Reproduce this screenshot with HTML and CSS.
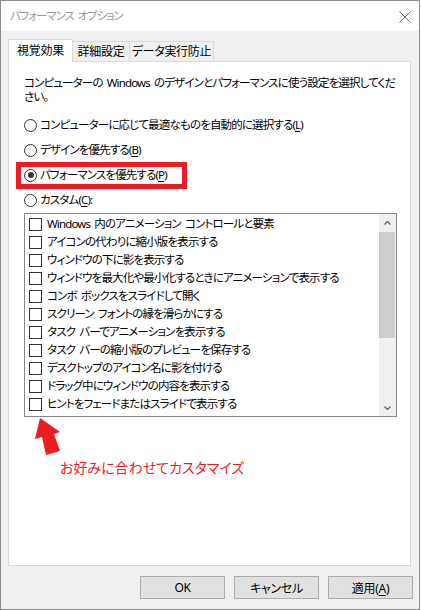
FILE: index.html
```html
<!DOCTYPE html>
<html lang="ja">
<head>
  <meta charset="UTF-8">
  <meta name="viewport" content="width=device-width, initial-scale=1.0">
  <title>パフォーマンス オプション</title>
  <link rel="stylesheet" href="styles.css">
</head>
<body>
  <div class="window">
    <div class="titlebar">
      <span class="title">パフォーマンス オプション</span>
      <svg class="close" width="12" height="12" viewBox="0 0 12 12">
        <path d="M0.5 0.5 L11.5 11.5 M11.5 0.5 L0.5 11.5" stroke="#666" stroke-width="1" fill="none"/>
      </svg>
    </div>

    <div class="dialog">
      <div class="tabs">
        <div class="tab active">視覚効果</div>
        <div class="tab">詳細設定</div>
        <div class="tab">データ実行防止</div>
      </div>

      <div class="panel">
        <p class="desc">コンピューターの Windows のデザインとパフォーマンスに使う設定を選択してください。</p>

        <div class="options">
          <label class="radio"><span class="circle"></span>コンピューターに応じて最適なものを自動的に選択する(<u>L</u>)</label>
          <label class="radio"><span class="circle"></span>デザインを優先する(<u>B</u>)</label>
          <label class="radio checked"><span class="circle"></span>パフォーマンスを優先する(<u>P</u>)<span class="mark"></span></label>
          <label class="radio"><span class="circle"></span>カスタム(<u>C</u>):</label>
        </div>

        <div class="list">
          <ul class="items">
            <li><span class="box"></span>Windows 内のアニメーション コントロールと要素</li>
            <li><span class="box"></span>アイコンの代わりに縮小版を表示する</li>
            <li><span class="box"></span>ウィンドウの下に影を表示する</li>
            <li><span class="box"></span>ウィンドウを最大化や最小化するときにアニメーションで表示する</li>
            <li><span class="box"></span>コンボ ボックスをスライドして開く</li>
            <li><span class="box"></span>スクリーン フォントの縁を滑らかにする</li>
            <li><span class="box"></span>タスク バーでアニメーションを表示する</li>
            <li><span class="box"></span>タスク バーの縮小版のプレビューを保存する</li>
            <li><span class="box"></span>デスクトップのアイコン名に影を付ける</li>
            <li><span class="box"></span>ドラッグ中にウィンドウの内容を表示する</li>
            <li><span class="box"></span>ヒントをフェードまたはスライドで表示する</li>
          </ul>
          <div class="scrollbar">
            <div class="sb-btn">
              <svg width="7" height="4" viewBox="0 0 7 4"><path d="M0.5 3.5 L3.5 0.5 L6.5 3.5" stroke="#606060" stroke-width="1.3" fill="none"/></svg>
            </div>
            <div class="thumb"></div>
            <div class="track"></div>
            <div class="sb-btn">
              <svg width="7" height="4" viewBox="0 0 7 4"><path d="M0.5 0.5 L3.5 3.5 L6.5 0.5" stroke="#606060" stroke-width="1.3" fill="none"/></svg>
            </div>
          </div>
        </div>

        <div class="note">
          <svg class="arrow" width="30" height="40" viewBox="0 0 30 40">
            <polygon points="8,1 28,15 22,17 28,34 14,38 10,20 3,22" fill="#ed1c24"/>
          </svg>
          <p class="note-text">お好みに合わせてカスタマイズ</p>
        </div>
      </div>

      <div class="buttons">
        <button type="button">OK</button>
        <button type="button">キャンセル</button>
        <button type="button">適用(<u>A</u>)</button>
      </div>
    </div>
  </div>
</body>
</html>
```

FILE: styles.css
```css
body {
  margin: 0;
  background: #fff;
  font-family: "Noto Sans", "Noto Sans CJK JP", sans-serif;
  font-size: 11.5px;
  letter-spacing: -0.85px;
  word-spacing: 2px;
  font-feature-settings: "palt";
  color: #000;
}
.window {
  width: 420px;
  height: 610px;
  box-sizing: border-box;
  border: 1px solid #8c8c8c;
  background: #f0f0f0;
  display: flex;
  flex-direction: column;
}
.titlebar {
  height: 30px;
  flex-shrink: 0;
  background: #fff;
  display: flex;
  align-items: center;
  justify-content: space-between;
  padding: 0 8px 0 9px;
}
.title {
  color: #999;
  letter-spacing: -1.1px;
  line-height: 14px;
}
.close {
  margin-top: 1px;
}
.dialog {
  flex: 1;
  display: flex;
  flex-direction: column;
  padding: 8px 0 10px 7px;
  min-height: 0;
}
.tabs {
  display: flex;
  height: 22px;
  flex-shrink: 0;
}
.tab {
  box-sizing: border-box;
  height: 20px;
  margin-top: 2px;
  margin-left: -1px;
  border: 1px solid #d9d9d9;
  border-bottom: none;
  background: #f0f0f0;
  display: flex;
  align-items: center;
  justify-content: center;
  width: 58px;
  font-size: 12px;
  letter-spacing: -0.3px;
  line-height: 14px;
}
.tab:last-child {
  width: 85px;
}
.tab.active {
  margin: 0 0 -1px 0;
  height: 23px;
  width: 65px;
  background: #fff;
  position: relative;
  z-index: 1;
  padding-bottom: 1px;
}
.panel {
  flex: 1;
  min-height: 0;
  margin-right: 8px;
  background: #fff;
  border: 1px solid #d9d9d9;
  padding: 14px 15px 0 15px;
}
.desc {
  margin: 0;
  width: 376px;
  line-height: 14px;
}
.options {
  margin-top: 12px;
  display: flex;
  flex-direction: column;
  gap: 7px;
}
.radio {
  height: 18px;
  display: flex;
  align-items: center;
  align-self: flex-start;
  position: relative;
  line-height: 14px;
}
.circle {
  width: 13px;
  height: 13px;
  box-sizing: border-box;
  border: 1px solid #333;
  border-radius: 50%;
  background: #fff;
  margin-right: 3px;
  display: flex;
  align-items: center;
  justify-content: center;
}
.checked .circle::after {
  content: "";
  width: 6px;
  height: 6px;
  border-radius: 50%;
  background: #333;
}
.mark {
  position: absolute;
  left: -8px;
  top: -4px;
  width: 171px;
  height: 27px;
  box-sizing: border-box;
  border: 5px solid #ed1c24;
}
.list {
  margin-top: 4px;
  width: 373px;
  height: 204px;
  box-sizing: border-box;
  border: 1px solid #828790;
  display: flex;
  overflow: hidden;
}
.items {
  flex: 1;
  list-style: none;
  margin: 0;
  padding: 1px 0 0 4px;
  overflow: hidden;
}
.items li {
  height: 18px;
  display: flex;
  align-items: center;
  white-space: nowrap;
  line-height: 14px;
}
.box {
  width: 13px;
  height: 13px;
  box-sizing: border-box;
  border: 1px solid #333;
  margin-right: 5px;
  flex-shrink: 0;
}
.scrollbar {
  width: 17px;
  background: #f0f0f0;
  display: flex;
  flex-direction: column;
}
.sb-btn {
  height: 17px;
  display: flex;
  align-items: center;
  justify-content: center;
}
.thumb {
  height: 106px;
  margin: 1px 1px 0 0;
  background: #cdcdcd;
}
.track {
  flex: 1;
}
.note {
  display: flex;
  flex-direction: column;
}
.arrow {
  display: block;
  margin-left: 8px;
}
.note-text {
  margin: 2px 0 0 36px;
  color: #ed1c24;
  font-size: 14px;
  letter-spacing: 0;
  word-spacing: 0;
  line-height: 18px;
}
.buttons {
  display: flex;
  justify-content: flex-end;
  gap: 9px;
  margin-top: 10px;
  padding-right: 6px;
}
button {
  width: 85px;
  height: 23px;
  background: #e1e1e1;
  border: 1px solid #adadad;
  font-family: inherit;
  font-size: 12px;
  font-feature-settings: "palt";
  letter-spacing: -0.3px;
  color: #000;
  padding: 0;
}
u {
  text-decoration-thickness: 1px;
  text-underline-offset: 2px;
}
```
